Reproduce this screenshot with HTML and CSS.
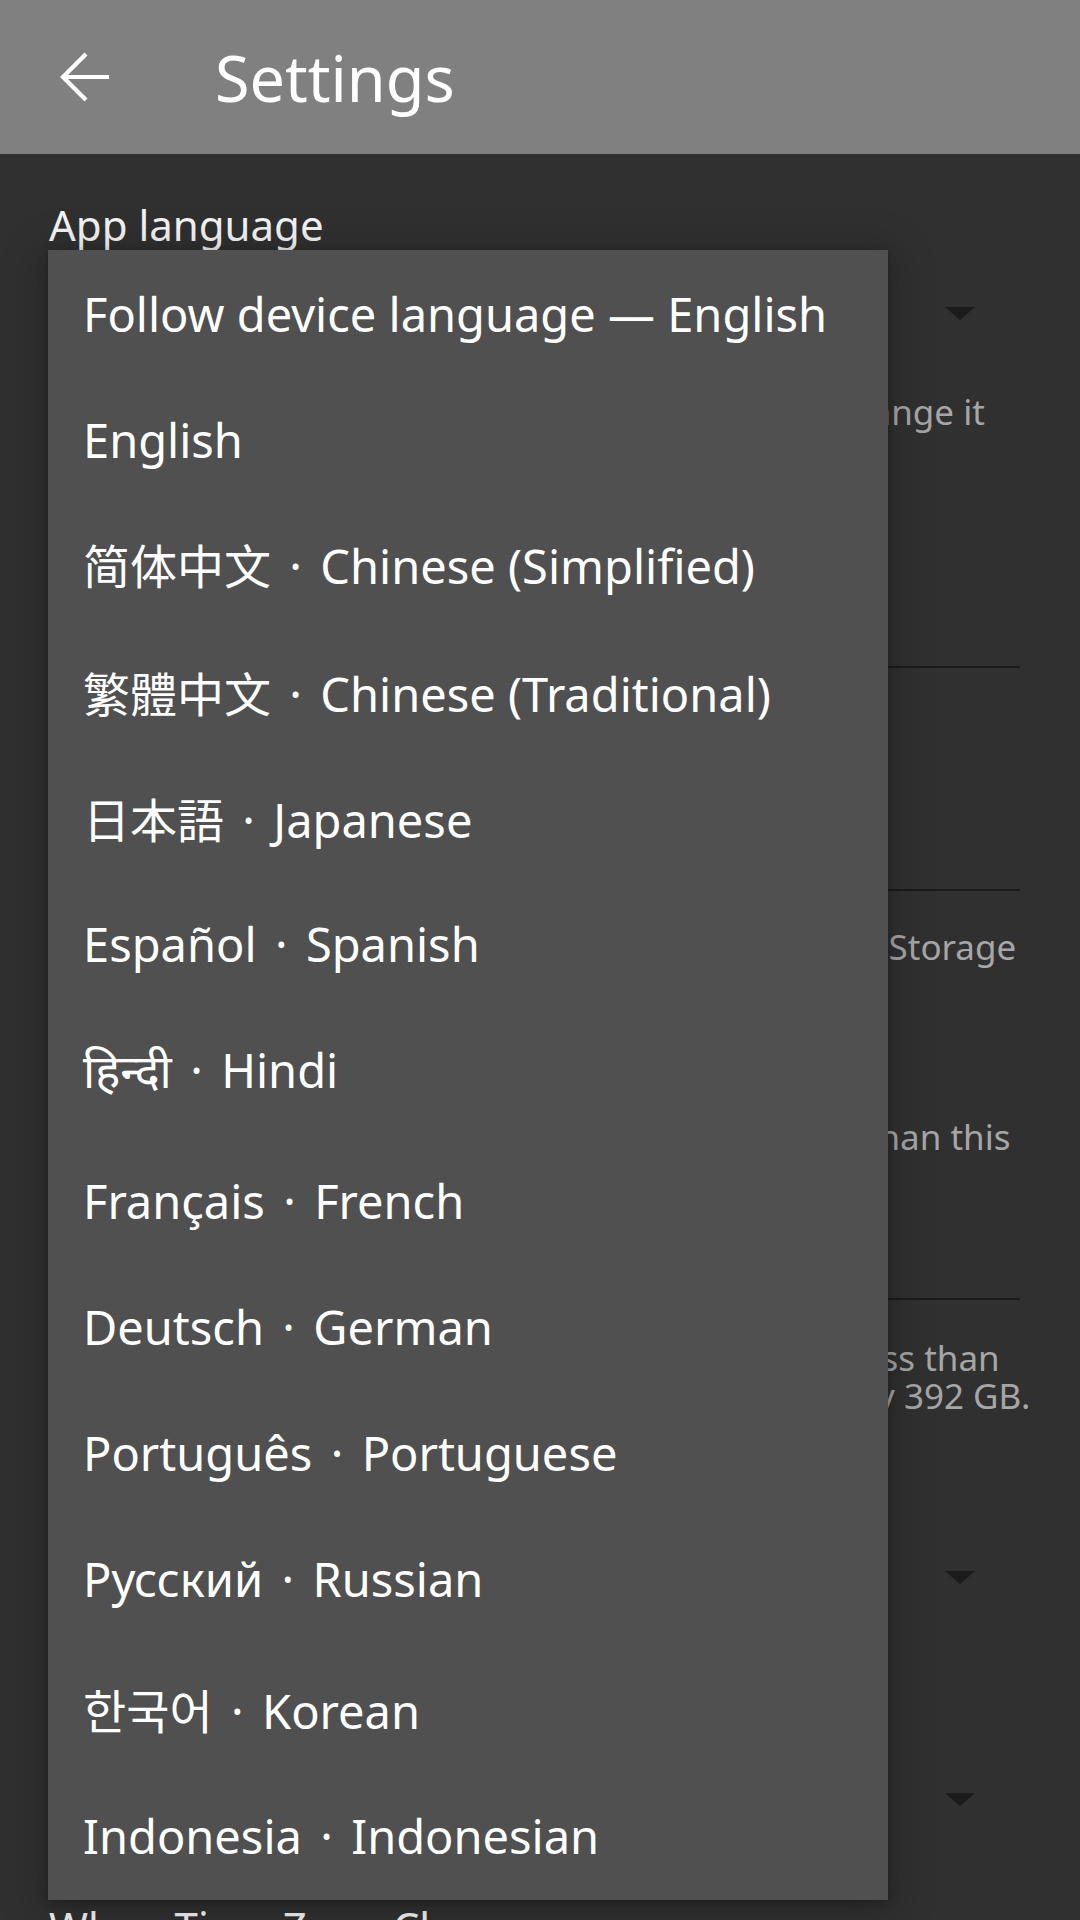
FILE: index.html
```html
<!DOCTYPE html>
<html lang="en">
<head>
  <meta charset="UTF-8">
  <title>Settings</title>
  <link rel="stylesheet" href="styles.css">
</head>
<body>
  <header class="appbar">
    <button class="back" aria-label="Back">
      <svg width="50" height="50" viewBox="0 0 50 50"><path d="M50 25H4M27 2L4 25L27 48"/></svg>
    </button>
    <h1 class="title">Settings</h1>
  </header>

  <main class="settings">
    <section class="group">
      <div class="label">App language</div>
      <div class="spinner">
        <span class="spinner-value">Follow device language — English</span>
        <span class="caret"></span>
      </div>
      <p class="hint hint-lang">Adopts the device language by default; you can change it<br>here at any time.</p>
    </section>
    <hr class="divider divider-first">

    <section class="group">
      <label class="check-row">
        <span class="checkbox"></span>
        <span class="label">Keep screen on</span>
      </label>
    </section>
    <hr class="divider">

    <section class="group group-storage">
      <p class="hint hint-top">Files are stored in the app's folder on your Internal Storage</p>
      <div class="label label-gap">Low storage warning</div>
      <p class="hint hint-low">Notify me when free space on this device is lower than this</p>
      <div class="field">50 GB</div>
    </section>
    <hr class="divider">

    <section class="group">
      <p class="hint hint-top">A warning will be shown when your free space is less than<br>10% of your entire storage space, which is currently 392 GB.</p>
      <div class="label label-gap">Warning style</div>
      <div class="spinner">
        <span class="spinner-value">Notification</span>
        <span class="caret"></span>
      </div>
      <div class="label label-next">Check interval</div>
      <div class="spinner">
        <span class="spinner-value">Every hour</span>
        <span class="caret"></span>
      </div>
      <div class="label label-last">When Time Zone Changes</div>
    </section>
  </main>

  <ul class="menu">
    <li class="menu-item">Follow device language — English</li>
    <li class="menu-item">English</li>
    <li class="menu-item"><span lang="zh-Hans">简体中文</span><span class="sep">·</span>Chinese (Simplified)</li>
    <li class="menu-item"><span lang="zh-Hant">繁體中文</span><span class="sep">·</span>Chinese (Traditional)</li>
    <li class="menu-item"><span lang="ja">日本語</span><span class="sep">·</span>Japanese</li>
    <li class="menu-item">Español<span class="sep">·</span>Spanish</li>
    <li class="menu-item menu-item-hi"><span lang="hi">हिन्दी</span><span class="sep">·</span>Hindi</li>
    <li class="menu-item">Français<span class="sep">·</span>French</li>
    <li class="menu-item">Deutsch<span class="sep">·</span>German</li>
    <li class="menu-item">Português<span class="sep">·</span>Portuguese</li>
    <li class="menu-item">Русский<span class="sep">·</span>Russian</li>
    <li class="menu-item menu-item-ko"><span lang="ko">한국어</span><span class="sep">·</span>Korean</li>
    <li class="menu-item">Indonesia<span class="sep">·</span>Indonesian</li>
  </ul>
</body>
</html>
```

FILE: styles.css
```css
* {
  box-sizing: border-box;
}
body {
  margin: 0;
  height: 1920px;
  overflow: hidden;
  position: relative;
  background: #303030;
  color: #fff;
  font-family: "Noto Sans", "Noto Sans CJK SC", sans-serif;
}
:lang(zh-Hant) {
  font-family: "Noto Sans CJK TC", sans-serif;
}
:lang(ja) {
  font-family: "Noto Sans CJK JP", sans-serif;
}
:lang(ko) {
  font-family: "Noto Sans CJK KR", sans-serif;
}
:lang(hi) {
  font-family: "Noto Sans Devanagari", "Noto Sans", sans-serif;
}

/* top bar */
.appbar {
  display: flex;
  align-items: center;
  height: 154px;
  background: #808080;
}
.back {
  width: 50px;
  height: 50px;
  margin-left: 59px;
  padding: 0;
  border: 0;
  background: none;
}
.back svg {
  display: block;
  fill: none;
  stroke: #fff;
  stroke-width: 4.2;
}
.title {
  margin: 0 0 0 106px;
  font-size: 63px;
  font-weight: 400;
}

/* settings list behind the popup */
.settings {
  padding: 46px 60px 0 49px;
}
.label {
  font-size: 42px;
  line-height: 50px;
  color: #f4f4f4;
}
.label-gap {
  margin-top: 49px;
}
.label-next {
  margin-top: 46px;
}
.label-last {
  margin-top: 40px;
}
.spinner {
  display: flex;
  align-items: center;
  justify-content: space-between;
  height: 126px;
  padding: 0 45px 0 35px;
  font-size: 47px;
}
.caret {
  width: 0;
  height: 0;
  border-left: 15px solid transparent;
  border-right: 15px solid transparent;
  border-top: 13px solid #1b1b1b;
}
.hint {
  margin: 13px 0 0;
  font-size: 35px;
  line-height: 38px;
  color: #a6a6a6;
  white-space: nowrap;
}
.hint-lang {
  margin-top: 17px;
}
.hint-top {
  margin-top: 39px;
}
.hint-low {
  margin-top: 53px;
}
.divider {
  margin: 0;
  border: 0;
  border-top: 2px solid #1b1b1b;
}
.divider-first {
  margin-top: 197px;
}
.check-row {
  display: flex;
  align-items: center;
  gap: 30px;
  height: 221px;
}
.checkbox {
  width: 44px;
  height: 44px;
  border: 4px solid #bdbdbd;
  border-radius: 4px;
}
.group-storage .hint-top {
  margin-top: 37px;
}
.field {
  width: 300px;
  height: 80px;
  margin: 20px 0 42px;
  font-size: 40px;
  line-height: 80px;
}

/* language popup */
.menu {
  position: absolute;
  top: 250px;
  left: 48px;
  width: 840px;
  margin: 0;
  padding: 1px 0;
  list-style: none;
  background: #505050;
  box-shadow: 0 6px 40px 6px rgba(0, 0, 0, 0.22), 0 2px 8px rgba(0, 0, 0, 0.25);
}
.menu-item {
  height: 126px;
  padding-left: 35px;
  font-size: 47px;
  line-height: 126px;
  white-space: nowrap;
}
.menu-item-hi {
  height: 131px;
}
.menu-item-ko {
  height: 131px;
  padding-top: 4px;
}
.sep {
  display: inline-block;
  width: 1.05em;
  text-align: center;
}
```
